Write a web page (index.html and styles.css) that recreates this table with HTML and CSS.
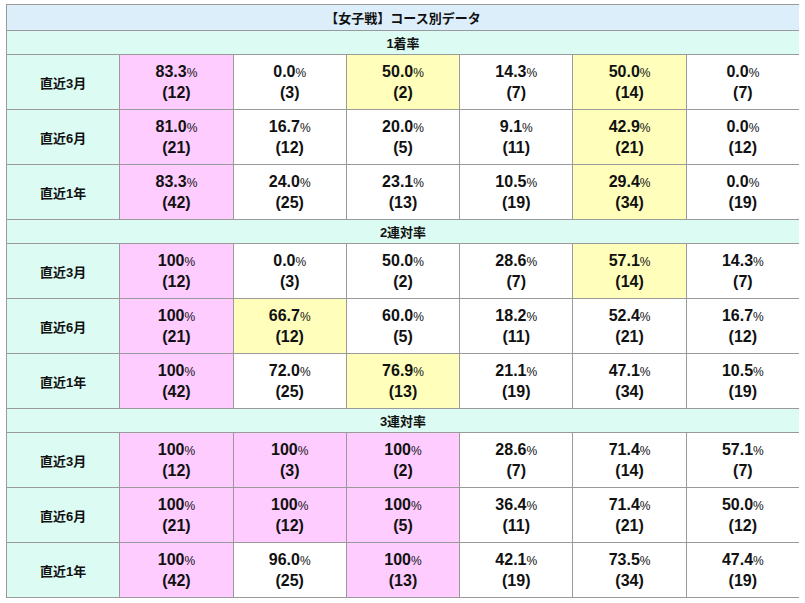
FILE: index.html
```html
<!DOCTYPE html>
<html lang="ja">
<head>
<meta charset="utf-8">
<title>【女子戦】コース別データ</title>
<link rel="stylesheet" href="styles.css">
</head>
<body>
<table class="data">
  <colgroup>
    <col><col><col><col><col><col><col>
  </colgroup>
  <tbody>
    <tr class="title"><th colspan="7">【女子戦】コース別データ</th></tr>

    <tr class="section"><th colspan="7">1着率</th></tr>
    <tr>
      <th class="label">直近3月</th>
      <td class="pink">83.3<small>%</small><br>(12)</td>
      <td>0.0<small>%</small><br>(3)</td>
      <td class="yellow">50.0<small>%</small><br>(2)</td>
      <td>14.3<small>%</small><br>(7)</td>
      <td class="yellow">50.0<small>%</small><br>(14)</td>
      <td>0.0<small>%</small><br>(7)</td>
    </tr>
    <tr>
      <th class="label">直近6月</th>
      <td class="pink">81.0<small>%</small><br>(21)</td>
      <td>16.7<small>%</small><br>(12)</td>
      <td>20.0<small>%</small><br>(5)</td>
      <td>9.1<small>%</small><br>(11)</td>
      <td class="yellow">42.9<small>%</small><br>(21)</td>
      <td>0.0<small>%</small><br>(12)</td>
    </tr>
    <tr>
      <th class="label">直近1年</th>
      <td class="pink">83.3<small>%</small><br>(42)</td>
      <td>24.0<small>%</small><br>(25)</td>
      <td>23.1<small>%</small><br>(13)</td>
      <td>10.5<small>%</small><br>(19)</td>
      <td class="yellow">29.4<small>%</small><br>(34)</td>
      <td>0.0<small>%</small><br>(19)</td>
    </tr>

    <tr class="section"><th colspan="7">2連対率</th></tr>
    <tr>
      <th class="label">直近3月</th>
      <td class="pink">100<small>%</small><br>(12)</td>
      <td>0.0<small>%</small><br>(3)</td>
      <td>50.0<small>%</small><br>(2)</td>
      <td>28.6<small>%</small><br>(7)</td>
      <td class="yellow">57.1<small>%</small><br>(14)</td>
      <td>14.3<small>%</small><br>(7)</td>
    </tr>
    <tr>
      <th class="label">直近6月</th>
      <td class="pink">100<small>%</small><br>(21)</td>
      <td class="yellow">66.7<small>%</small><br>(12)</td>
      <td>60.0<small>%</small><br>(5)</td>
      <td>18.2<small>%</small><br>(11)</td>
      <td>52.4<small>%</small><br>(21)</td>
      <td>16.7<small>%</small><br>(12)</td>
    </tr>
    <tr>
      <th class="label">直近1年</th>
      <td class="pink">100<small>%</small><br>(42)</td>
      <td>72.0<small>%</small><br>(25)</td>
      <td class="yellow">76.9<small>%</small><br>(13)</td>
      <td>21.1<small>%</small><br>(19)</td>
      <td>47.1<small>%</small><br>(34)</td>
      <td>10.5<small>%</small><br>(19)</td>
    </tr>

    <tr class="section"><th colspan="7">3連対率</th></tr>
    <tr>
      <th class="label">直近3月</th>
      <td class="pink">100<small>%</small><br>(12)</td>
      <td class="pink">100<small>%</small><br>(3)</td>
      <td class="pink">100<small>%</small><br>(2)</td>
      <td>28.6<small>%</small><br>(7)</td>
      <td>71.4<small>%</small><br>(14)</td>
      <td>57.1<small>%</small><br>(7)</td>
    </tr>
    <tr>
      <th class="label">直近6月</th>
      <td class="pink">100<small>%</small><br>(21)</td>
      <td class="pink">100<small>%</small><br>(12)</td>
      <td class="pink">100<small>%</small><br>(5)</td>
      <td>36.4<small>%</small><br>(11)</td>
      <td>71.4<small>%</small><br>(21)</td>
      <td>50.0<small>%</small><br>(12)</td>
    </tr>
    <tr>
      <th class="label">直近1年</th>
      <td class="pink">100<small>%</small><br>(42)</td>
      <td>96.0<small>%</small><br>(25)</td>
      <td class="pink">100<small>%</small><br>(13)</td>
      <td>42.1<small>%</small><br>(19)</td>
      <td>73.5<small>%</small><br>(34)</td>
      <td>47.4<small>%</small><br>(19)</td>
    </tr>
  </tbody>
</table>
</body>
</html>
```

FILE: styles.css
```css
html, body {
  background: #ffffff;
}
body {
  margin: 4px 6px;
  font-family: "Liberation Sans", "Noto Sans CJK JP", Arial, sans-serif;
  color: #111111;
}
.data {
  width: 794px;
  border-collapse: collapse;
  table-layout: fixed;
}
.data th,
.data td {
  border: 1px solid #9a9a9a;
  text-align: center;
  vertical-align: middle;
  padding: 0;
}
.data td {
  height: 54px;
  font-size: 16px;
  font-weight: bold;
  line-height: 19px;
  background: #ffffff;
}
.data td small {
  font-size: 12px;
  font-weight: normal;
}
.title th {
  height: 25px;
  font-size: 13px;
  font-weight: bold;
  background: #ddeefb;
}
.section th {
  height: 23px;
  font-size: 13px;
  font-weight: bold;
  background: #dcfcf3;
}
.data th.label {
  font-size: 13px;
  font-weight: bold;
  background: #dcfcf3;
}
.data td.pink {
  background: #ffccff;
}
.data td.yellow {
  background: #ffffbb;
}
```
